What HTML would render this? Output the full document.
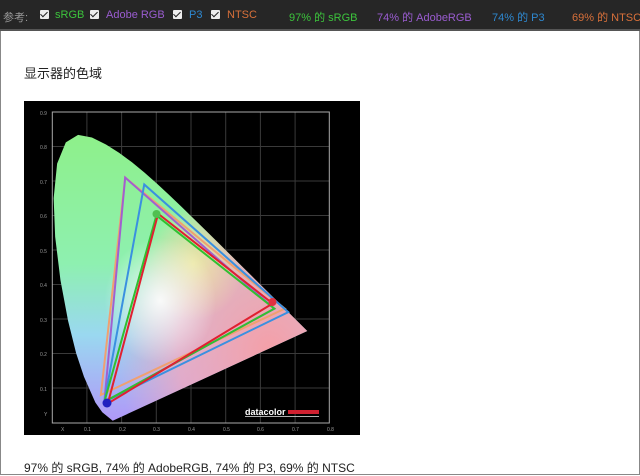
<!DOCTYPE html>
<html><head><meta charset="utf-8"><style>
body{margin:0;width:640px;height:475px;overflow:hidden;background:#fff;font-family:"Liberation Sans","Noto Sans CJK SC",sans-serif;position:relative}
.bar{position:absolute;left:0;top:0;width:640px;height:29px;background:#262626;border-bottom:2px solid #555;font-size:11px;color:#999}
.bar span{position:absolute;top:9px;white-space:nowrap}
.cb{display:inline-block;width:9px;height:9px;background:#eee;border-radius:1px;position:absolute;top:10px}
.cb::after{content:"";position:absolute;left:2px;top:0px;width:3px;height:6px;border:solid #222;border-width:0 1.5px 1.5px 0;transform:rotate(45deg)}
.frame{position:absolute;left:0;top:31px;width:638px;height:443px;border:1px solid #888;border-top:none}
.t{position:absolute;font-size:13px;color:#222;white-space:nowrap}
</style></head><body>
<div class="bar">
<span style="left:3px">参考:</span>
<i class="cb" style="left:40px"></i><span style="left:55px;color:#3cc43c">sRGB</span>
<i class="cb" style="left:90px"></i><span style="left:106px;color:#9a5cd0">Adobe RGB</span>
<i class="cb" style="left:173px"></i><span style="left:189px;color:#2e88d0">P3</span>
<i class="cb" style="left:211px"></i><span style="left:227px;color:#d8703a">NTSC</span>
<span style="left:289px;color:#3cc43c">97% 的 sRGB</span>
<span style="left:377px;color:#9a5cd0">74% 的 AdobeRGB</span>
<span style="left:492px;color:#2e88d0">74% 的 P3</span>
<span style="left:572px;color:#d8703a">69% 的 NTSC</span>
</div>
<div class="frame"></div>
<div class="t" style="left:24px;top:63px">显示器的色域</div>
<svg style="position:absolute;left:24px;top:101px" width="336" height="334" viewBox="24 101 336 334">
<defs>
<linearGradient id="g1" x1="0" y1="1" x2="0" y2="0">
<stop offset="0" stop-color="#8ef08a"/><stop offset="0.45" stop-color="#8ef0b0"/><stop offset="0.7" stop-color="#9ad8f0"/><stop offset="1" stop-color="#b098f8"/></linearGradient>
<radialGradient id="g2" cx="0.85" cy="0.25" r="0.6"><stop offset="0" stop-color="#f4a0a8"/><stop offset="0.6" stop-color="#f0a8c0" stop-opacity="0.8"/><stop offset="1" stop-color="#f0a8c0" stop-opacity="0"/></radialGradient>
<radialGradient id="g3" cx="0.42" cy="0.42" r="0.22"><stop offset="0" stop-color="#fff" stop-opacity="0.9"/><stop offset="1" stop-color="#fff" stop-opacity="0"/></radialGradient>
<radialGradient id="g4" cx="0.55" cy="0.55" r="0.2"><stop offset="0" stop-color="#f4f0a0" stop-opacity="0.8"/><stop offset="1" stop-color="#f4f0a0" stop-opacity="0"/></radialGradient>
<path id="loc" d="M0.1741 0.005L0.144 0.0297 0.1241 0.0578 0.0913 0.1327 0.0687 0.2007 0.0454 0.295 0.0235 0.4127 0.0082 0.5384 0.0039 0.65 0.0139 0.7502 0.0389 0.812 0.0743 0.8338 0.1142 0.8262 0.1547 0.8059 0.1929 0.7816 0.2296 0.7543 0.2658 0.7243 0.3016 0.6923 0.3373 0.6589 0.3731 0.6245 0.4087 0.5896 0.4441 0.5547 0.4788 0.5202 0.5125 0.4866 0.5448 0.4544 0.5752 0.4242 0.6029 0.3965 0.627 0.3725 0.6482 0.3514 0.6658 0.334 0.6915 0.3083 0.7347 0.2653Z"/>
</defs>
<rect x="24" y="101" width="336" height="334" fill="#000"/>
<g stroke="#3a3a3a" stroke-width="1">
<path d="M86.9 112V423M121.6 112V423M156.3 112V423M191 112V423M225.7 112V423M260.4 112V423M295.1 112V423M52 388H329M52 353.5H329M52 319H329M52 284.5H329M52 250H329M52 215.5H329M52 181H329M52 146.5H329"/>
</g>
<rect x="52.3" y="112" width="277" height="311" fill="none" stroke="#aaa" stroke-width="1"/>
<g transform="translate(52.3,422.5) scale(347,-345)">
<use href="#loc" fill="url(#g1)"/>
<use href="#loc" fill="url(#g2)"/>
<use href="#loc" fill="url(#g4)"/>
<use href="#loc" fill="url(#g3)"/>
<g fill="none" stroke-width="2">
<path d="M0.67 0.33L0.21 0.71 0.14 0.08Z" stroke="#f0a070" vector-effect="non-scaling-stroke"/>
<path d="M0.64 0.33L0.21 0.71 0.15 0.06Z" stroke="#a060d0" vector-effect="non-scaling-stroke"/>
<path d="M0.68 0.32L0.265 0.69 0.15 0.06Z" stroke="#3a90e0" vector-effect="non-scaling-stroke"/>
<path d="M0.64 0.33L0.30 0.60 0.15 0.06Z" stroke="#30c030" vector-effect="non-scaling-stroke"/>
<path d="M0.635 0.345L0.305 0.605 0.16 0.055Z" stroke="#e02030" vector-effect="non-scaling-stroke"/>
</g>
</g>
<circle cx="156.5" cy="214" r="4" fill="#50c050"/>
<circle cx="272.5" cy="302" r="4" fill="#e03040"/>
<circle cx="107" cy="403" r="4.5" fill="#2020c0"/>
<g font-size="5" fill="#999" font-family="Liberation Sans,sans-serif">
<text x="40" y="115">0.9</text><text x="40" y="149">0.8</text><text x="40" y="184">0.7</text><text x="40" y="218">0.6</text><text x="40" y="253">0.5</text><text x="40" y="287">0.4</text><text x="40" y="322">0.3</text><text x="40" y="356">0.2</text><text x="40" y="391">0.1</text><text x="44" y="416">Y</text>
<text x="61" y="431">X</text><text x="84" y="431">0.1</text><text x="119" y="431">0.2</text><text x="153" y="431">0.3</text><text x="188" y="431">0.4</text><text x="223" y="431">0.5</text><text x="257" y="431">0.6</text><text x="292" y="431">0.7</text><text x="327" y="431">0.8</text>
</g>
<text x="245" y="415" font-size="9" font-weight="bold" fill="#fff" font-family="Liberation Sans,sans-serif">datacolor</text>
<rect x="288" y="410" width="31" height="4" fill="#d02030"/>
<rect x="245" y="416" width="74" height="0.8" fill="#ddd"/>
</svg>
<div class="t" style="left:24px;top:459px;font-size:12px">97% 的 sRGB, 74% 的 AdobeRGB, 74% 的 P3, 69% 的 NTSC</div>
</body></html>
